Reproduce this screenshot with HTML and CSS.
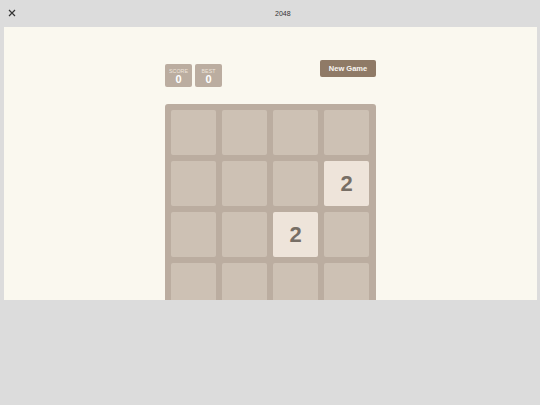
FILE: index.html
```html
<!DOCTYPE html>
<html>
<head>
<meta charset="utf-8">
<title>2048</title>
<link rel="stylesheet" href="styles.css">
</head>
<body>
<div class="topbar">
  <span class="close">
    <svg width="8" height="8" viewBox="0 0 8 8"><path d="M1 1L7 7M7 1L1 7" stroke="#333" stroke-width="1.2" fill="none"/></svg>
  </span>
  <span class="title">2048</span>
</div>
<div class="panel">
  <div class="game">
    <div class="header">
      <div class="scores">
        <div class="score-box"><div class="label">SCORE</div><div class="value">0</div></div>
        <div class="score-box"><div class="label">BEST</div><div class="value">0</div></div>
      </div>
      <div class="new-game">New Game</div>
    </div>
    <div class="board">
      <div class="cell"></div><div class="cell"></div><div class="cell"></div><div class="cell"></div>
      <div class="cell"></div><div class="cell"></div><div class="cell"></div><div class="cell tile">2</div>
      <div class="cell"></div><div class="cell"></div><div class="cell tile">2</div><div class="cell"></div>
      <div class="cell"></div><div class="cell"></div><div class="cell"></div><div class="cell"></div>
    </div>
  </div>
</div>
</body>
</html>
```

FILE: styles.css
```css
html, body {
  margin: 0;
  padding: 0;
}
body {
  background: #dcdcdc;
  font-family: "Liberation Sans", Arial, sans-serif;
  width: 540px;
  height: 405px;
  overflow: hidden;
}
.topbar {
  height: 27px;
  display: flex;
  align-items: center;
}
.close {
  display: flex;
  margin-left: 8px;
  width: 8px;
  height: 8px;
  margin-top: -2px;
}
.title {
  margin-left: 259px;
  font-size: 7px;
  color: #333;
  margin-top: -1px;
}
.panel {
  margin: 0 3px 0 4px;
  height: 273px;
  background: #faf8ef;
  overflow: hidden;
}
.game {
  width: 211px;
  margin-left: 161px;
  padding-top: 33px;
}
.header {
  display: flex;
  justify-content: space-between;
  align-items: flex-start;
  height: 27px;
}
.scores {
  display: flex;
  gap: 3px;
  margin-top: 4px;
}
.score-box {
  width: 27px;
  height: 23px;
  background: #bbada0;
  border-radius: 2px;
  text-align: center;
  box-sizing: border-box;
  padding-top: 4px;
}
.label {
  font-size: 5.3px;
  color: #eee4da;
  line-height: 6px;
}
.value {
  font-size: 11px;
  font-weight: bold;
  color: #fff;
  line-height: 11px;
}
.new-game {
  width: 56px;
  height: 17px;
  background: #8f7a66;
  border-radius: 2px;
  color: #f9f6f2;
  font-size: 7.5px;
  font-weight: bold;
  line-height: 17px;
  text-align: center;
}
.board {
  margin-top: 17px;
  background: #bbada0;
  border-radius: 3px;
  padding: 6px;
  display: grid;
  grid-template-columns: repeat(4, 45px);
  grid-auto-rows: 45px;
  gap: 6px;
}
.cell {
  background: #cdc1b4;
  border-radius: 2px;
}
.tile {
  background: #eee4da;
  color: #776e65;
  font-weight: bold;
  font-size: 22px;
  display: flex;
  align-items: center;
  justify-content: center;
}
```
